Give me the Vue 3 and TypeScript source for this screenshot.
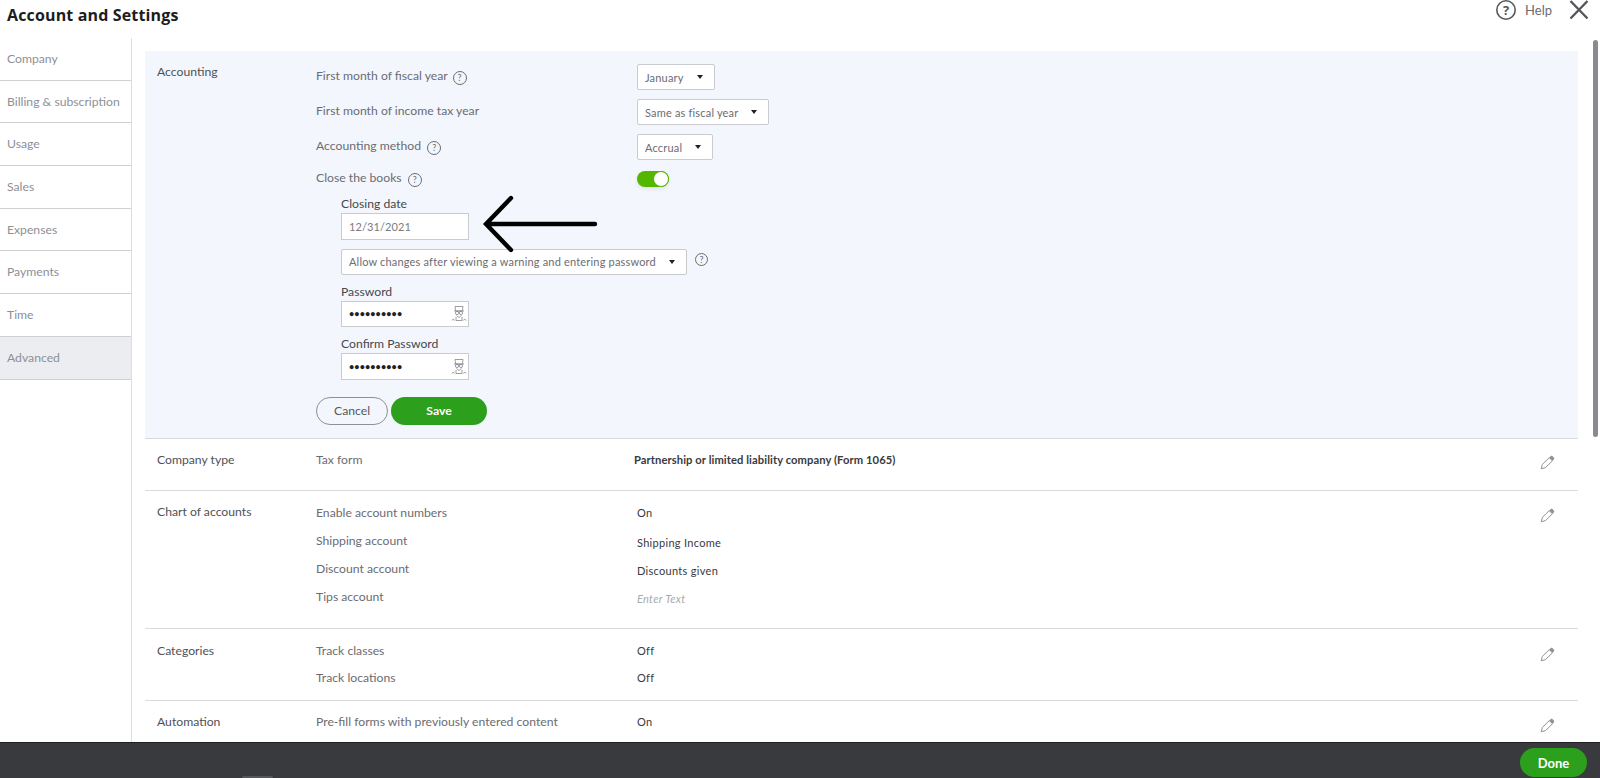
<script setup lang="ts">
interface Nav { label: string; active?: boolean }
const nav: Nav[] = [
  { label: 'Company' },
  { label: 'Billing & subscription' },
  { label: 'Usage' },
  { label: 'Sales' },
  { label: 'Expenses' },
  { label: 'Payments' },
  { label: 'Time' },
  { label: 'Advanced', active: true },
]
const chart = [
  { k: 'Enable account numbers', v: 'On', first: true },
  { k: 'Shipping account', v: 'Shipping Income' },
  { k: 'Discount account', v: 'Discounts given' },
  { k: 'Tips account', v: 'Enter Text', hint: true },
]
const pencil = 'M2.2 13.8 3.4 9.4 10.2 2.6 13.4 5.8 6.6 12.6Z'
const head = 'M10.2 2.6 11.6 1.2c.7-.6 1.4-.6 2 0l1.2 1.2c.6.6.6 1.3 0 2L13.4 5.8Z'
</script>

<template>
  <div class="app">
    <header class="top">
      <h1 class="title">Account and Settings</h1>
      <div class="help">
        <svg class="help-ic" width="22" height="22" viewBox="0 0 22 22">
          <circle cx="11" cy="11" r="9.2" fill="none" stroke="#55575b" stroke-width="1.6" />
          <text x="11" y="15.5" text-anchor="middle" class="q">?</text>
        </svg>
        <span class="help-t">Help</span>
        <svg class="close" width="20" height="20" viewBox="0 0 20 20">
          <path d="M1.5 1 18.5 18.5M18.5 1 1.5 18.5" stroke="#55575b" stroke-width="2.4" fill="none" />
        </svg>
      </div>
    </header>

    <div class="body">
      <nav class="side">
        <div v-for="n in nav" :key="n.label" class="nav" :class="{ on: n.active }">{{ n.label }}</div>
      </nav>

      <main class="main">
        <section class="panel">
          <div class="name">Accounting</div>
          <div class="form">
            <div class="f"><span class="k">First month of fiscal year <i class="qm wide">?</i></span>
              <div class="sel w78">January<b class="car" /></div></div>
            <div class="f"><span class="k">First month of income tax year</span>
              <div class="sel w132">Same as fiscal year<b class="car" /></div></div>
            <div class="f"><span class="k">Accounting method <i class="qm">?</i></span>
              <div class="sel w76">Accrual<b class="car" /></div></div>
            <div class="f f-t"><span class="k">Close the books <i class="qm">?</i></span>
              <div class="tog"><b /></div></div>

            <div class="ind">
              <label class="lab">Closing date</label>
              <div class="inp">12/31/2021</div>
              <div class="selrow">
                <div class="sel w346">Allow changes after viewing a warning and entering password<b class="car" /></div>
                <i class="qm small">?</i>
              </div>
              <label class="lab">Password</label>
              <div class="inp pw">
                <span class="dots">••••••••••</span>
                <svg width="16" height="17" viewBox="0 0 16 17" fill="none" stroke="#85878b" stroke-width="0.8">
                  <path d="M4 1.5h8l-.6 4.5H4.6ZM3 6h10" />
                  <circle cx="6" cy="8" r="1.6" /><circle cx="10" cy="8" r="1.6" />
                  <path d="M5.5 10.5 8 12.5l2.5-2M5 12v3.5h6V12" />
                  <path d="M1 15.5c0-1.4 2.5-1.4 2.5 0M12.5 15.5c0-1.4 2.5-1.4 2.5 0" />
                </svg>
              </div>
              <label class="lab">Confirm Password</label>
              <div class="inp pw">
                <span class="dots">••••••••••</span>
                <svg width="16" height="17" viewBox="0 0 16 17" fill="none" stroke="#85878b" stroke-width="0.8">
                  <path d="M4 1.5h8l-.6 4.5H4.6ZM3 6h10" />
                  <circle cx="6" cy="8" r="1.6" /><circle cx="10" cy="8" r="1.6" />
                  <path d="M5.5 10.5 8 12.5l2.5-2M5 12v3.5h6V12" />
                  <path d="M1 15.5c0-1.4 2.5-1.4 2.5 0M12.5 15.5c0-1.4 2.5-1.4 2.5 0" />
                </svg>
              </div>
            </div>

            <div class="btns">
              <button class="cancel">Cancel</button>
              <button class="save">Save</button>
            </div>
          </div>
          <svg class="arrow" width="118" height="60" viewBox="0 0 118 60" fill="none" stroke="#000" stroke-width="4.4" stroke-linecap="round">
            <path d="M114 30H6M30 4 5 30l25 26" />
          </svg>
        </section>

        <section class="row r1">
          <div class="name">Company type</div>
          <div class="k">Tax form</div>
          <div class="val strong">Partnership or limited liability company (Form 1065)</div>
          <svg class="pen" width="16" height="16" viewBox="0 0 16 16"><path :d="pencil" fill="none" stroke="#909296" stroke-width="1" /><path :d="head" fill="#909296" /></svg>
        </section>

        <section class="row r2">
          <div class="name">Chart of accounts</div>
          <div class="list">
            <div v-for="c in chart" :key="c.k" class="line">
              <span class="k">{{ c.k }}</span>
              <span class="val" :class="{ hint: c.hint, first: c.first }">{{ c.v }}</span>
            </div>
          </div>
          <svg class="pen" width="16" height="16" viewBox="0 0 16 16"><path :d="pencil" fill="none" stroke="#909296" stroke-width="1" /><path :d="head" fill="#909296" /></svg>
        </section>

        <section class="row r3">
          <div class="name">Categories</div>
          <div class="list">
            <div class="line l26"><span class="k">Track classes</span><span class="val first">Off</span></div>
            <div class="line l26"><span class="k">Track locations</span><span class="val first">Off</span></div>
          </div>
          <svg class="pen" width="16" height="16" viewBox="0 0 16 16"><path :d="pencil" fill="none" stroke="#909296" stroke-width="1" /><path :d="head" fill="#909296" /></svg>
        </section>

        <section class="row r4">
          <div class="name">Automation</div>
          <div class="list">
            <div class="line l26"><span class="k">Pre-fill forms with previously entered content</span><span class="val first">On</span></div>
          </div>
          <svg class="pen" width="16" height="16" viewBox="0 0 16 16"><path :d="pencil" fill="none" stroke="#909296" stroke-width="1" /><path :d="head" fill="#909296" /></svg>
        </section>
      </main>
      <div class="thumb" />
    </div>

    <footer class="foot">
      <span class="tab" />
      <button class="done">Done</button>
    </footer>
  </div>
</template>

<style>
html, body { margin: 0; background: #fff; overflow: hidden; }
</style>

<style scoped>
.app { width: 1600px; height: 778px; display: flex; flex-direction: column; overflow: hidden; font-family: Lato, "Open Sans", sans-serif; color: #6b6c72; font-size: 12.2px; }
.top { height: 38px; flex: none; display: flex; justify-content: space-between; align-items: flex-start; }
.title { margin: 4px 0 0 7px; font-size: 16px; line-height: 22px; font-weight: 700; color: #1c1d20; letter-spacing: 0.15px; font-family: "Open Sans", sans-serif; }
.help { display: flex; align-items: center; height: 20px; margin-right: 11px; }
.help-ic { margin-right: 8px; }
.q { font: 700 13px "Open Sans", sans-serif; fill: #55575b; }
.help-t { font-size: 13px; color: #6b6c72; margin-right: 17px; }
.close { margin-top: -1px; }

.body { flex: 1; min-height: 0; display: flex; position: relative; }
.side { width: 131px; flex: none; border-right: 1px solid #dcdde0; }
.nav { height: 42.7px; box-sizing: border-box; padding: 12px 0 0 7px; line-height: 18px; color: #8d9096; border-bottom: 1px solid #cfd0d4; }
.nav.on { background: #ebedf0; }
.main { width: 1433px; margin-left: 13px; margin-top: 13px; flex: none; }

.panel { position: relative; height: 388px; box-sizing: border-box; padding: 13px 0 0 12px; background: #f3f7fd; border-bottom: 1px solid #d9dadd; display: flex; }
.name { width: 159px; flex: none; color: #4f5157; line-height: 18px; }
.panel > .name { margin-top: -1px; }
.form { flex: 1; }
.k { color: #6b6c72; line-height: 18px; white-space: nowrap; }
.f { display: flex; height: 26px; margin-bottom: 9px; }
.f > .k { width: 321px; flex: none; line-height: 24px; }
.f-t { height: 16px; margin-top: 11px; margin-bottom: 0; }
.f-t > .k { line-height: 14px; }

.qm { display: inline-flex; width: 12px; height: 12px; border: 1px solid #6b6c72; border-radius: 50%; align-items: center; justify-content: center; font-style: normal; font-size: 9px; line-height: 1; vertical-align: -1px; margin-left: 3px; }
.qm.wide { margin-left: 2px; }
.qm.small { margin-left: 8px; margin-top: 4px; width: 11px; height: 11px; flex: none; }

.sel { box-sizing: border-box; height: 26px; background: #fff; border: 1px solid #c9cbce; border-radius: 2px; display: flex; align-items: center; justify-content: space-between; padding: 0 11px 0 7px; font-size: 11px; color: #6b6c72; letter-spacing: 0.18px; white-space: nowrap; }
.w78 { width: 78px; } .w132 { width: 132px; } .w76 { width: 76px; } .w346 { width: 346px; }
.car { width: 0; height: 0; flex: none; border-left: 3.5px solid transparent; border-right: 3.5px solid transparent; border-top: 4px solid #222; }

.tog { width: 32px; height: 16px; border-radius: 8px; background: #53b700; position: relative; box-shadow: 0 2px 4px rgba(0,0,0,.08); }
.tog b { position: absolute; right: 0; top: 0; width: 14px; height: 14px; border-radius: 50%; background: #fff; border: 1px solid #53b700; }

.ind { margin-left: 25px; }
.lab { display: block; line-height: 19px; margin-top: 7px; color: #45474c; }
.inp { box-sizing: border-box; width: 128px; height: 26.5px; background: #fff; border: 1px solid #c9cbce; padding-left: 7px; display: flex; align-items: center; font-size: 11px; color: #7a7c81; letter-spacing: 0.1px; }
.selrow { display: flex; margin-top: 9px; }
.pw { justify-content: space-between; padding-right: 1px; }
.dots { color: #222; font-size: 9px; letter-spacing: 0.1px; font-weight: 700; }

.btns { display: flex; gap: 3px; margin-top: 17px; }
.btns button { height: 28px; border-radius: 14px; font: inherit; padding: 0 0 0; }
.cancel { width: 72px; background: transparent; border: 1px solid #8d9096; color: #55575b; }
.btns .save { width: 96px; background: #2ca01c; border: 0; color: #fff; font-weight: 700; }

.arrow { position: absolute; left: 336px; top: 143px; }

.row { position: relative; box-sizing: border-box; padding-left: 12px; display: flex; border-bottom: 1px solid #d9dadd; }
.r1 { height: 52px; padding-top: 12px; }
.r2 { height: 138px; padding-top: 8px; }
.r3 { height: 72px; padding-top: 9px; }
.r4 { height: 60px; padding-top: 8px; border-bottom: 0; }
.r2 .name { margin-top: 4px; }
.r3 .name { margin-top: 4px; }
.r4 .name { margin-top: 4px; }
.r1 .k { width: 318px; }
.list { flex: 1; }
.line { display: flex; height: 28px; align-items: flex-start; padding-top: 5px; box-sizing: border-box; }
.l26 { height: 26.5px; padding-top: 4px; }
.line .k { width: 321px; flex: none; }
.val { color: #393a3d; font-size: 11px; line-height: 18px; letter-spacing: 0.3px; padding-top: 2px; }
.val.first { padding-top: 0; }
.strong { font-weight: 700; font-size: 11.2px; padding-top: 0; letter-spacing: 0.08px; }
.hint { color: #a8aaae; font-style: italic; }
.pen { position: absolute; right: 23px; top: 16px; }
.r2 .pen { top: 17px; }
.r3 .pen { top: 18px; }
.r4 .pen { top: 17px; }

.thumb { position: absolute; right: 2px; top: 2px; width: 5px; height: 397px; background: #8a8b8e; border-radius: 3px; }

.foot { height: 36px; flex: none; box-sizing: border-box; background: #393a3d; border-top: 1px solid #1e1f21; display: flex; justify-content: flex-end; position: relative; }
.done { width: 67px; height: 29px; margin: 5px 13px 0 0; border: 0; border-radius: 15px; background: #2ca01c; color: #fff; font: 700 13px Lato, sans-serif; padding: 0; }
.tab { position: absolute; left: 242px; bottom: 0; width: 31px; height: 2px; background: #55575b; border-radius: 2px 2px 0 0; }
</style>
